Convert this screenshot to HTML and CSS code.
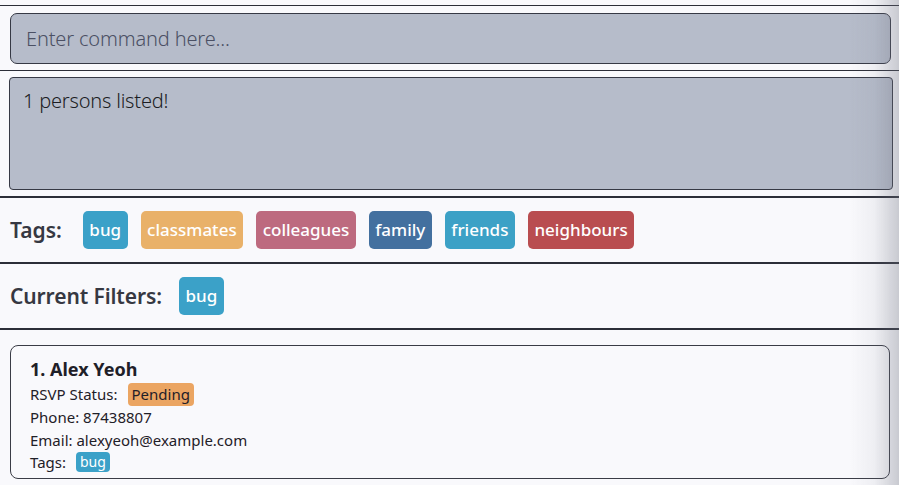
FILE: index.html
```html
<!DOCTYPE html>
<html>
<head>
<meta charset="utf-8">
<link rel="stylesheet" href="styles.css">
</head>
<body>
<div class="app">
  <div class="topbar"></div>
  <section class="command">
    <div class="command-box">Enter command here...</div>
  </section>
  <section class="result">
    <div class="result-box">1 persons listed!</div>
  </section>
  <section class="tagbar">
    <span class="bar-label">Tags:</span>
    <div class="chips">
      <span class="chip c-bug">bug</span>
      <span class="chip c-classmates">classmates</span>
      <span class="chip c-colleagues">colleagues</span>
      <span class="chip c-family">family</span>
      <span class="chip c-friends">friends</span>
      <span class="chip c-neighbours">neighbours</span>
    </div>
  </section>
  <section class="tagbar filters">
    <span class="bar-label">Current Filters:</span>
    <div class="chips">
      <span class="chip c-bug">bug</span>
    </div>
  </section>
  <section class="list">
    <div class="card">
      <div class="name">1. Alex Yeoh</div>
      <div class="row">RSVP Status: <span class="mini pending">Pending</span></div>
      <div class="row">Phone: 87438807</div>
      <div class="row">Email: alexyeoh@example.com</div>
      <div class="row">Tags: <span class="mini small c-bug">bug</span></div>
    </div>
  </section>
  <div class="edge-shade"></div>
</div>
</body>
</html>
```
FILE: styles.css
```css
html, body {
  margin: 0;
  padding: 0;
  background: #f9f9fc;
  font-family: "Noto Sans", "Open Sans", sans-serif;
  color: #23242c;
}
.app {
  display: flex;
  flex-direction: column;
  width: 899px;
  height: 485px;
  overflow: hidden;
}
.topbar {
  height: 5px;
  flex: none;
  border-bottom: 1px solid #2c2e38;
}
.command {
  padding: 7px 8px 6px 10px;
  border-bottom: 1px solid #2c2e38;
}
.command-box {
  box-sizing: border-box;
  height: 51px;
  border: 1px solid #363945;
  border-radius: 7px;
  background: #b6bcca;
  padding: 0 15px;
  display: flex;
  align-items: center;
  font-size: 20px;
  font-weight: 300;
  color: #4b5064;
  letter-spacing: -0.15px;
}
.result {
  padding: 6px 6px 6px 9px;
  border-bottom: 2px solid #2c2e38;
}
.result-box {
  box-sizing: border-box;
  height: 113px;
  border: 1px solid #363945;
  border-radius: 4px;
  background: #b6bcca;
  padding: 9px 13px;
  font-size: 20px;
  font-weight: 300;
  color: #1c1d24;
  letter-spacing: -0.2px;
}
.tagbar {
  height: 66px;
  box-sizing: border-box;
  display: flex;
  align-items: center;
  padding-left: 10px;
  padding-bottom: 1px;
  border-bottom: 2px solid #2c2e38;
}
.bar-label {
  font-size: 21px;
  font-weight: 600;
  color: #363842;
  margin-right: 21px;
}
.filters .bar-label {
  margin-right: 17px;
  letter-spacing: -0.1px;
}
.chips {
  display: flex;
  gap: 13px;
}
.chip {
  height: 38px;
  box-sizing: border-box;
  display: inline-flex;
  align-items: center;
  padding: 0 6.5px;
  border-radius: 5px;
  color: #fff;
  font-size: 17px;
  font-weight: 500;
}
.c-bug { background: #3ba1c8; }
.c-classmates { background: #e9b169; }
.c-colleagues { background: #bd6a7f; }
.c-family { background: #43709f; }
.c-friends { background: #3ca1c6; }
.c-neighbours { background: #b94d50; }
.list {
  padding: 15px 9px 0 10px;
}
.card {
  box-sizing: border-box;
  height: 134px;
  border: 1px solid #3a3c46;
  border-radius: 8px;
  padding: 9px 19px;
  background: #f9f9fc;
}
.name {
  font-size: 18px;
  font-weight: 700;
  color: #1f2028;
  line-height: 28px;
}
.row {
  font-size: 15px;
  line-height: 22.5px;
  color: #1f2028;
  display: flex;
  align-items: center;
}
.mini {
  display: inline-flex;
  align-items: center;
  margin-left: 10px;
  border-radius: 4px;
  padding: 0 4px;
  height: 23px;
  font-size: 15px;
}
.pending {
  background: #eba562;
  color: #1f2028;
}
.mini.small {
  height: 20px;
  font-size: 14px;
  color: #fff;
  padding: 0 4px;
}
.edge-shade {
  position: fixed;
  top: 0;
  right: 0;
  width: 50px;
  height: 485px;
  pointer-events: none;
  background: linear-gradient(to right, rgba(120,124,140,0) 0%, rgba(120,124,140,0.08) 50%, rgba(110,114,128,0.35) 100%);
}
```
